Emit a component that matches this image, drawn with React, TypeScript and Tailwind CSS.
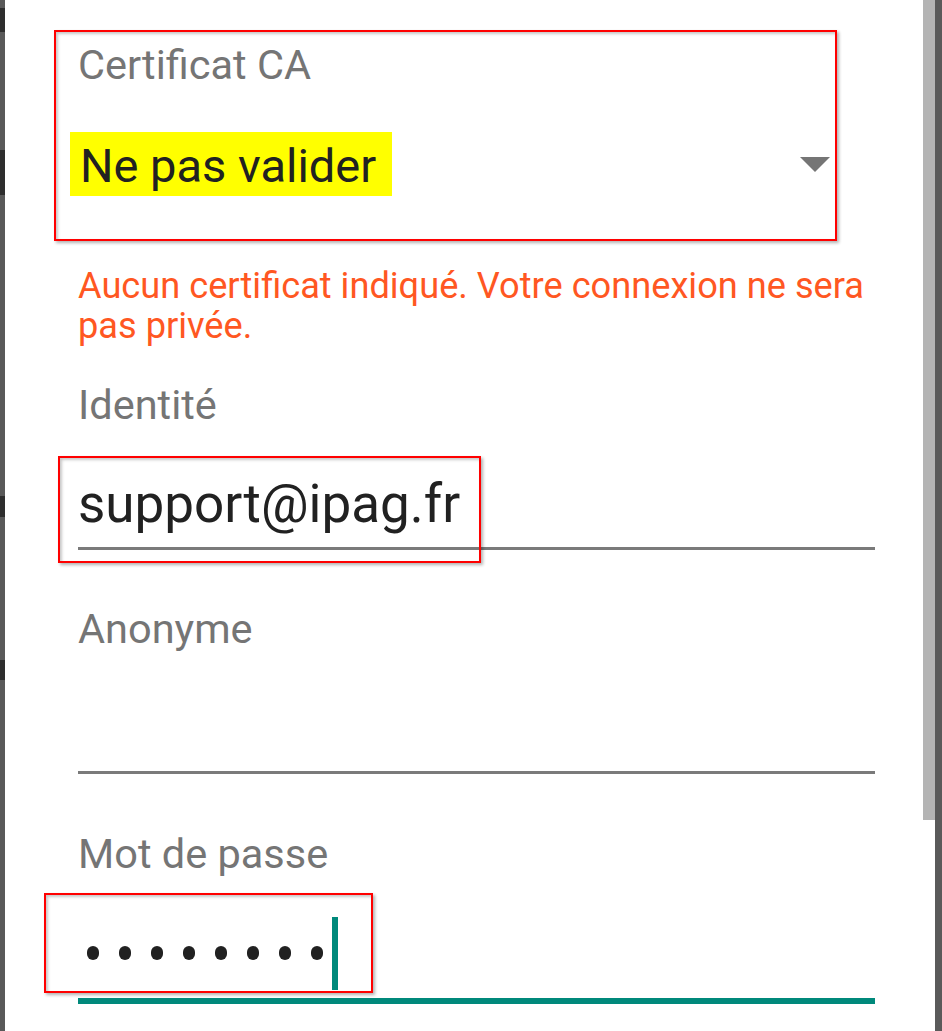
import React from "react"

// red annotation frame drawn over a field
function Callout({ className }: { className: string }) {
  return (
    <div
      className={`pointer-events-none absolute border-2 border-[#ff0000] shadow-[2px_2px_3px_rgba(0,0,0,0.3),inset_2px_2px_3px_rgba(0,0,0,0.22)] ${className}`}
    />
  )
}

function Label({ children, className = "" }: { children: React.ReactNode; className?: string }) {
  return <div className={`text-[41.5px] leading-[48px] text-[#757575] ${className}`}>{children}</div>
}

export default function App() {
  return (
    <div className="flex h-[1031px] w-full overflow-hidden bg-white font-['Roboto',_'Noto_Sans',_sans-serif]">
      {/* --- dimmed backdrop edge (left) --- */}
      <div className="flex w-[5px] shrink-0 flex-col bg-[#595959]">
        <div className="h-[8px]" />
        <div className="h-[24px] bg-[#2e2e2e]" />
        <div className="h-[118px]" />
        <div className="h-[45px] bg-[#2e2e2e]" />
        <div className="h-[301px]" />
        <div className="h-[21px] bg-[#2e2e2e]" />
        <div className="h-[143px]" />
        <div className="h-[20px] bg-[#2e2e2e]" />
      </div>

      {/* --- Form --- */}
      <div className="flex-1 pl-[73px] pr-[48px]">
        {/* CA certificate spinner */}
        <div className="relative mt-[30px] h-[211px] pt-[11px]">
          <Callout className="left-[-24px] top-0 h-[211px] w-[783px]" />
          <Label>Certificat CA</Label>
          <div className="mt-[43px] flex items-center justify-between pr-[45px]">
            <span className="-ml-[8px] inline-block h-[64px] bg-[#ffff00] pl-[10px] pr-[16px] pt-[4px] text-[47px] leading-[60px] text-[#212121]">
              Ne pas valider
            </span>
            <svg width="30" height="15" viewBox="0 0 30 15">
              <path d="M0 0h30L15 15z" fill="#757575" />
            </svg>
          </div>
        </div>

        {/* warning */}
        <p className="mt-[25px] text-[36.2px] leading-[40px] text-[#ff5722]">
          Aucun certificat indiqué. Votre connexion ne sera pas privée.
        </p>

        {/* Identity */}
        <Label className="mt-[35px]">Identité</Label>
        <div className="relative mt-[45px]">
          <Callout className="left-[-20px] top-[-18px] h-[107px] w-[423px]" />
          <div className="h-[60px] text-[53px] leading-[60px] text-[#212121]">support@ipag.fr</div>
          <div className="mt-[13px] h-[3px] bg-[#7a7a7a]" />
        </div>

        {/* Anonymous identity */}
        <Label className="mt-[55px]">Anonyme</Label>
        <div className="mt-[45px]">
          <div className="h-[60px]" />
          <div className="mt-[13px] h-[3px] bg-[#7a7a7a]" />
        </div>

        {/* Password (focused) */}
        <Label className="mt-[56px]">Mot de passe</Label>
        <div className="relative mt-[45px]">
          <Callout className="left-[-34px] top-[-30px] h-[100px] w-[329px]" />
          <div className="flex h-[60px] items-center pl-[9px]">
            <div className="flex gap-[20px]">
              {Array.from({ length: 8 }).map((_, i) => (
                <span key={i} className="block h-[14px] w-[12px] rounded-full bg-[#212121]" />
              ))}
            </div>
            <span className="ml-[9px] block h-[73px] w-[6px] shrink-0 bg-[#00897b]" />
          </div>
          <div className="mt-[15px] h-[6px] bg-[#00897b]" />
        </div>
      </div>

      {/* --- scrollbar + right edge --- */}
      <div className="w-[12px] shrink-0">
        <div className="h-[820px] bg-[#b4b4b4]" />
      </div>
      <div className="w-[7px] shrink-0 bg-[#5a5a5a]" />
    </div>
  )
}
